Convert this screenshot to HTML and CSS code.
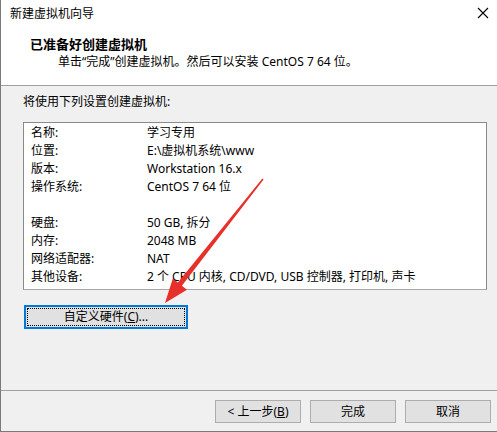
FILE: index.html
```html
<!DOCTYPE html>
<html lang="zh-CN">
  <head>
    <meta charset="UTF-8" />
    <title>新建虚拟机向导</title>
    <link rel="stylesheet" href="styles.css">
  </head>
  <body>
    <div class="wizard">
      <div class="top">
        <div class="titlebar">
          <span class="title">新建虚拟机向导</span>
          <svg class="close" width="12" height="12" viewBox="0 0 12 12">
            <path d="M1 1 L11 11 M11 1 L1 11" stroke="#000" stroke-width="1.1" fill="none"/>
          </svg>
        </div>
        <div class="head">
          <div class="head-title">已准备好创建虚拟机</div>
          <div class="head-sub">单击“完成”创建虚拟机。然后可以安装 CentOS 7 64 位。</div>
        </div>
      </div>

      <div class="main">
        <p class="intro">将使用下列设置创建虚拟机:</p>
        <div class="summary">
          <div class="row"><span class="key">名称:</span><span>学习专用</span></div>
          <div class="row"><span class="key">位置:</span><span>E:\虚拟机系统\www</span></div>
          <div class="row"><span class="key">版本:</span><span>Workstation 16.x</span></div>
          <div class="row"><span class="key">操作系统:</span><span>CentOS 7 64 位</span></div>
          <div class="row"></div>
          <div class="row"><span class="key">硬盘:</span><span>50 GB, 拆分</span></div>
          <div class="row"><span class="key">内存:</span><span>2048 MB</span></div>
          <div class="row"><span class="key">网络适配器:</span><span>NAT</span></div>
          <div class="row"><span class="key">其他设备:</span><span>2 个 CPU 内核, CD/DVD, USB 控制器, 打印机, 声卡</span></div>
        </div>
        <button class="btn btn-focus">自定义硬件(<u>C</u>)...</button>
      </div>

      <div class="footer">
        <button class="btn">&lt; 上一步(<u>B</u>)</button>
        <button class="btn">完成</button>
        <button class="btn">取消</button>
      </div>

      <!-- red annotation arrow drawn over the dialog -->
      <svg class="arrow" width="497" height="432" viewBox="0 0 497 432">
        <polygon fill="#e8302a" points="262.4,178.5 177.9,282.6 172.8,278.6 165,303 187,289.8 181.9,285.8 263.6,179.5"/>
      </svg>
    </div>
  </body>
</html>
```

FILE: styles.css
```css
body {
  margin: 0;
  background: #ffffff;
  font-family: "Noto Sans", "Noto Sans CJK SC", sans-serif;
  font-size: 12px;
  color: #000;
}
.wizard {
  position: relative;
  width: 497px;
  height: 432px;
  box-sizing: border-box;
  border-left: 1px solid #7a7a7a;
  border-bottom: 1px solid #7a7a7a;
  background: #f0f0f0;
  overflow: hidden;
}
.top {
  background: #ffffff;
  height: 86px;
  box-sizing: border-box;
  border-bottom: 1px solid #a0a0a0;
}
.titlebar {
  height: 28px;
  display: flex;
  align-items: center;
  justify-content: space-between;
  padding: 0 8px 0 9px;
}
.title {
  line-height: 18px;
}
.close {
  margin-top: -2px;
}
.head {
  padding-left: 29px;
  padding-top: 7px;
}
.head-title {
  font-weight: bold;
  font-size: 13px;
  line-height: 18px;
}
.head-sub {
  line-height: 18px;
  padding-left: 28px;
}
.main {
  height: 304px;
  padding: 7px 10px 0 22px;
  box-sizing: border-box;
}
.intro {
  margin: 0;
  line-height: 18px;
}
.summary {
  margin-top: 11px;
  height: 168px;
  width: 464px;
  box-sizing: border-box;
  background: #ffffff;
  border: 1px solid #8a8a8a;
  border-bottom-color: #a8a8a8;
  padding: 1px 0 0 7px;
  white-space: nowrap;
  overflow: hidden;
}
.row {
  display: flex;
  height: 18px;
  line-height: 18px;
}
.key {
  width: 116px;
  flex-shrink: 0;
}
.btn {
  font-family: inherit;
  font-size: 12px;
  color: #000;
  background: #e1e1e1;
  border: 1px solid #adadad;
  padding: 0;
  width: 86px;
  height: 23px;
  line-height: 20px;
}
.btn-focus {
  margin-top: 15px;
  margin-left: 1px;
  width: 164px;
  height: 24px;
  border-color: #0078d7;
  box-shadow: inset 0 0 0 1px #0078d7;
  outline: 1px dotted #000;
  outline-offset: -4px;
}
.footer {
  height: 40px;
  box-sizing: border-box;
  border-top: 1px solid #a0a0a0;
  display: flex;
  justify-content: flex-end;
  align-items: flex-start;
  gap: 9px;
  padding: 9px 6px 0 0;
}
.arrow {
  position: absolute;
  left: -1px;
  top: 0;
  pointer-events: none;
}
```
